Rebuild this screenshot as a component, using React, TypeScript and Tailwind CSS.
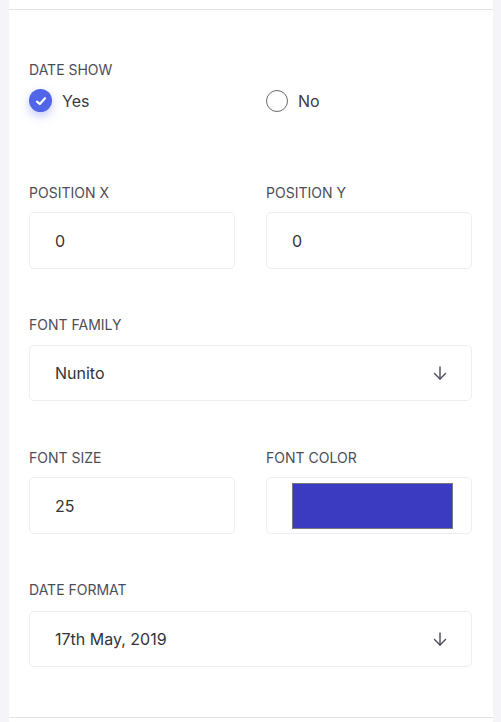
import React from "react";

const font = { fontFamily: "Inter, 'Noto Sans', sans-serif" };

function Label({ children, className = "" }: { children: React.ReactNode; className?: string }) {
  return (
    <div className={`text-[14px] leading-[20px] text-[#4d4d55] uppercase ${className}`}>{children}</div>
  );
}

function Arrow() {
  return (
    <svg width="14" height="14" viewBox="0 0 14 14" fill="none" stroke="#4a4a55" strokeWidth="1.4" strokeLinecap="round" strokeLinejoin="round">
      <path d="M7 1 V13" />
      <path d="M1.5 7.5 L7 13 L12.5 7.5" />
    </svg>
  );
}

function Box({ children, className = "" }: { children: React.ReactNode; className?: string }) {
  return (
    <div className={`flex items-center rounded-[5px] border border-[#ededf3] bg-white ${className}`}>{children}</div>
  );
}

export default function App() {
  return (
    <div className="min-h-[722px] w-[501px] bg-[#f4f4f9]" style={font}>
      <div className="ml-[9px] w-[484px] bg-white">
        <div className="h-[9px]" />
        <div className="h-px bg-[#e2e2e6]" />
        <div className="pl-[20px] pr-[21px]">
          <Label className="mt-[50px]">Date Show</Label>
          <div className="mt-[9px] grid h-[22px] grid-cols-2 gap-[31px]">
            <div className="flex items-center gap-[10px]">
              <div className="flex h-[23px] w-[23px] items-center justify-center rounded-full bg-[#5165e8] shadow-[0_4px_10px_rgba(81,101,232,0.35)]">
                <svg width="14" height="14" viewBox="0 0 14 14" fill="none" stroke="white" strokeWidth="2.2" strokeLinecap="round" strokeLinejoin="round">
                  <path d="M3 7.6 L5.8 10 L11 4.2" />
                </svg>
              </div>
              <span className="text-[16px] leading-[22px] text-[#3a3a42]">Yes</span>
            </div>
            <div className="flex items-center gap-[10px]">
              <div className="h-[22px] w-[22px] rounded-full border-[1.5px] border-[#6a6a70]" />
              <span className="text-[16px] leading-[22px] text-[#3a3a42]">No</span>
            </div>
          </div>

          <div className="mt-[72px] grid grid-cols-2 gap-[31px]">
            <div>
              <Label>Position X</Label>
              <Box className="mt-[9px] h-[57px] px-[25px]">
                <span className="text-[16px] text-[#333338]">0</span>
              </Box>
            </div>
            <div>
              <Label>Position Y</Label>
              <Box className="mt-[9px] h-[57px] px-[25px]">
                <span className="text-[16px] text-[#333338]">0</span>
              </Box>
            </div>
          </div>

          <Label className="mt-[46px]">Font Family</Label>
          <Box className="mt-[10px] h-[56px] justify-between pl-[25px] pr-[24px]">
            <span className="text-[16px] text-[#333338]">Nunito</span>
            <Arrow />
          </Box>

          <div className="mt-[47px] grid grid-cols-2 gap-[31px]">
            <div>
              <Label>Font Size</Label>
              <Box className="mt-[9px] h-[57px] px-[25px]">
                <span className="text-[16px] text-[#333338]">25</span>
              </Box>
            </div>
            <div>
              <Label>Font Color</Label>
              <Box className="mt-[9px] h-[57px] pl-[25px] pr-[18px]">
                <div className="h-[46px] flex-1 border border-[#77777d] bg-[#3a3bc0]" />
              </Box>
            </div>
          </div>

          <Label className="mt-[46px]">Date Format</Label>
          <Box className="mt-[11px] h-[56px] justify-between pl-[25px] pr-[24px]">
            <span className="text-[16px] text-[#333338]">17th May, 2019</span>
            <Arrow />
          </Box>
          <div className="h-[50px]" />
        </div>
        <div className="h-px bg-[#e2e2e6]" />
        <div className="h-[4px]" />
      </div>
    </div>
  );
}
